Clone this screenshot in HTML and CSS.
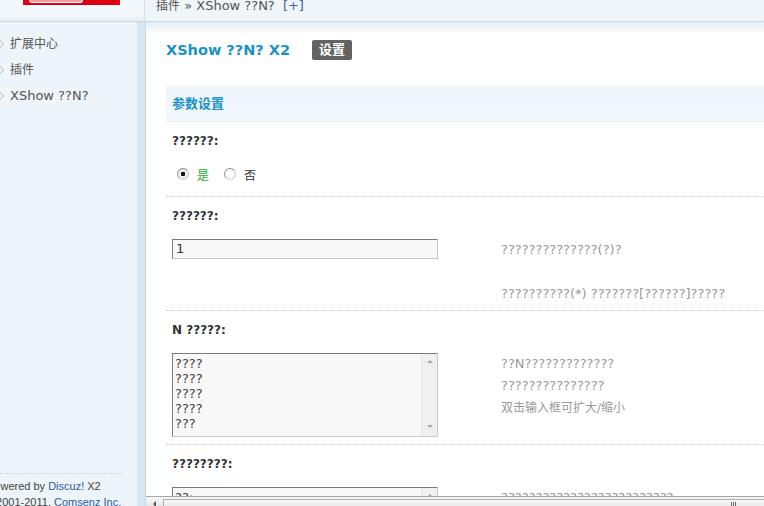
FILE: index.html
```html
<!DOCTYPE html>
<html>
<head>
<meta charset="utf-8">
<link rel="stylesheet" href="styles.css">
</head>
<body>
<div class="top">
  <div class="top-left"><div class="logo"><span class="logo-glow"></span></div></div>
  <div class="crumb"><span class="cjk">插件</span> » XShow ??N? <span class="plus">[+]</span></div>
</div>
<div class="frame">
  <aside class="side">
    <ul class="menu">
      <li><span class="cjk">扩展中心</span></li>
      <li><span class="cjk">插件</span></li>
      <li>XShow ??N?</li>
    </ul>
    <div class="copy">
      <p class="c1">Powered by <span class="lnk">Discuz!</span> X2</p>
      <p class="c2">&copy;2001-2011, <span class="lnk">Comsenz Inc.</span></p>
    </div>
  </aside>
  <main class="content">
    <div class="scrollarea">
      <div class="title-row">
        <h1 class="title">XShow ??N? X2</h1>
        <span class="btn">设置</span>
      </div>
      <div class="section">参数设置</div>

      <div class="lbl">??????:</div>
      <div class="val val1">
        <div class="radios">
          <span class="radio checked"></span><span class="opt yes">是</span>
          <span class="radio"></span><span class="opt">否</span>
        </div>
      </div>

      <div class="lbl">??????:</div>
      <div class="val val2">
        <div><div class="inp">1</div></div>
        <div class="desc">??????????????(?)?<br><br>??????????(*) ???????[??????]?????</div>
      </div>

      <div class="lbl">N ?????:</div>
      <div class="val val3">
        <div>
          <div class="ta">
            <div class="ta-text">????
????
????
????
???</div>
            <div class="ta-bar"><span class="arr-up"></span><span class="arr-down"></span></div>
          </div>
        </div>
        <div class="desc">??N?????????????<br>???????????????<br><span class="cjk">双击输入框可扩大/缩小</span></div>
      </div>

      <div class="lbl">????????:</div>
      <div class="val val4">
        <div>
          <div class="ta">
            <div class="ta-text">??:</div>
            <div class="ta-bar"><span class="arr-up"></span><span class="arr-down"></span></div>
          </div>
        </div>
        <div class="desc">?????????????????????????</div>
      </div>
    </div>
    <div class="hscroll">
      <div class="hs-btn"><span class="arr-left"></span></div>
      <div class="hs-thumb"><span class="grip"></span></div>
    </div>
  </main>
</div>
</body>
</html>
```
FILE: styles.css
```css
html, body {
  margin: 0;
  padding: 0;
  width: 764px;
  height: 506px;
  overflow: hidden;
  background: #fff;
  font-family: "DejaVu Sans", "Noto Sans CJK SC", sans-serif;
  font-size: 12px;
  color: #333;
}
.cjk { font-size: 12px; }

.top {
  display: flex;
  height: 21px;
  border-bottom: 1px solid #c6d8e2;
  background: #eff5f9;
}
.top-left {
  width: 145px;
  flex-shrink: 0;
  border-right: 1px solid #d2e1ea;
  box-sizing: border-box;
  background: linear-gradient(#f3f8fc 0, #f3f8fc 17px, #e9f1f7 17px);
}
.logo {
  margin-left: 23px;
  width: 97px;
  height: 5px;
  background: #dc0012;
  overflow: hidden;
}
.logo-glow {
  display: block;
  margin-left: 6px;
  width: 52px;
  height: 2px;
  border: 1px solid #fff;
  border-top: 0;
  background: rgba(255, 255, 255, 0.6);
  border-radius: 0 0 6px 6px;
  filter: blur(0.6px);
}
.crumb {
  padding-left: 11px;
  font-size: 13px;
  line-height: 12px;
  color: #555;
  white-space: nowrap;
}
.plus { color: #3d63a6; margin-left: 4px; }

.frame {
  display: flex;
  height: 484px;
}
.side {
  width: 137px;
  flex-shrink: 0;
  background: #edf4fa;
  border-right: 8px solid #d7e6f3;
  display: flex;
  flex-direction: column;
  overflow: hidden;
}
.menu {
  list-style: none;
  margin: 0;
  padding: 9px 0 0;
}
.menu li {
  position: relative;
  height: 26px;
  line-height: 26px;
  padding-left: 10px;
  font-size: 13px;
  color: #555;
  white-space: nowrap;
}
.menu li::before {
  content: "";
  position: absolute;
  left: -3px;
  top: 10px;
  width: 4px;
  height: 4px;
  border: 1px solid #c4c9cc;
  transform: rotate(45deg);
}
.copy {
  margin-top: auto;
  margin-right: 15px;
  margin-bottom: -4px;
  padding-top: 4px;
  border-top: 1px dashed #cfd8de;
}
.copy p {
  margin: 0;
  white-space: nowrap;
  font-family: "Liberation Sans", "Noto Sans CJK SC", sans-serif;
  font-size: 11px;
  line-height: 16px;
  color: #444;
}
.copy .c1 { margin-left: -13px; }
.copy .c2 { margin-left: -12px; }
.lnk { color: #2c5d9f; }

.content {
  flex: 1;
  min-width: 0;
  border-left: 1px solid #c9d8e2;
  display: flex;
  flex-direction: column;
}
.scrollarea {
  flex: 1;
  overflow: hidden;
  padding-left: 20px;
  background: linear-gradient(#e3edf4, #ffffff 12px) no-repeat;
}
.title-row {
  display: flex;
  align-items: center;
  height: 20px;
  margin-top: 18px;
}
.title {
  margin: 0;
  font-size: 14.5px;
  font-weight: bold;
  color: #1a92c8;
  white-space: nowrap;
}
.btn {
  margin-left: 22px;
  height: 20px;
  line-height: 20px;
  padding: 0 7px;
  background: #636363;
  color: #fff;
  font-weight: bold;
  font-size: 13px;
  border-radius: 2px;
}
.section {
  margin-top: 26px;
  height: 35px;
  line-height: 35px;
  padding-left: 6px;
  background: linear-gradient(#eef5fb, #f3f9fd);
  border-bottom: 1px solid #e4eef5;
  font-weight: bold;
  color: #1a92c8;
  font-size: 13px;
}
.lbl {
  height: 30px;
  box-sizing: border-box;
  padding: 10px 0 0 6px;
  line-height: 18px;
  font-weight: bold;
  font-size: 12px;
  color: #333;
  white-space: nowrap;
}
.val {
  display: grid;
  grid-template-columns: 329px 1fr;
  box-sizing: border-box;
  padding: 12px 0 0 6px;
  border-bottom: 1px dotted #cfcfcf;
}
.val1 { height: 45px; }
.val2 { height: 84px; }
.val3 { height: 104px; }
.val4 { height: 60px; }

.radios {
  display: flex;
  align-items: center;
  height: 20px;
}
.radio {
  width: 12px;
  height: 12px;
  box-sizing: border-box;
  border-radius: 50%;
  border: 1px solid;
  border-color: #8a8a8a #c6c6c6 #d6d6d6 #9a9a9a;
  background: #fdfdfd;
  margin-left: 5px;
}
.radio.checked { background: radial-gradient(#111 0, #111 2px, #f3f3f3 2.5px, #e6e6e6 6px); }
.opt {
  margin-left: 8px;
  margin-right: 10px;
  font-size: 12px;
  color: #333;
}
.opt.yes { color: #19b319; }

.inp {
  width: 266px;
  height: 20px;
  box-sizing: border-box;
  border: 1px solid;
  border-color: #7c7c7c #c9c9c9 #c9c9c9 #7c7c7c;
  background: #f8f8f8;
  padding-left: 3px;
  font-size: 13px;
  line-height: 18px;
  color: #333;
}
.desc {
  font-size: 13px;
  line-height: 22px;
  color: #9a9a9a;
  white-space: nowrap;
}
.ta {
  width: 266px;
  height: 84px;
  box-sizing: border-box;
  border: 1px solid;
  border-color: #7c7c7c #c9c9c9 #c9c9c9 #7c7c7c;
  background: #f8f8f8;
  display: flex;
}
.ta-text {
  flex: 1;
  padding: 2px 2px;
  font-size: 13px;
  line-height: 15px;
  color: #444;
  white-space: pre;
  overflow: hidden;
}
.ta-bar {
  width: 16px;
  background: #f0f0f0;
  border-left: 1px solid #e6e6e6;
  display: flex;
  flex-direction: column;
  justify-content: space-between;
  align-items: center;
  padding: 6px 0 8px;
  box-sizing: border-box;
}
.arr-up {
  width: 0; height: 0;
  border-left: 3px solid transparent;
  border-right: 3px solid transparent;
  border-bottom: 3px solid #a8a8a8;
}
.arr-down {
  width: 0; height: 0;
  border-left: 3px solid transparent;
  border-right: 3px solid transparent;
  border-top: 3px solid #a8a8a8;
}

.hscroll {
  height: 10px;
  flex-shrink: 0;
  box-sizing: border-box;
  border-top: 1px solid #a8a8a8;
  background: linear-gradient(#f6f6f6, #e8e8e8);
  display: flex;
}
.hs-btn {
  width: 17px;
  display: flex;
  justify-content: center;
  padding-top: 4px;
}
.arr-left {
  width: 0; height: 0;
  border-top: 3px solid transparent;
  border-bottom: 3px solid transparent;
  border-right: 3px solid #555;
}
.hs-thumb {
  flex: 1;
  margin-top: 2px;
  border-top: 1px solid #b0b0b0;
  border-left: 1px solid #b0b0b0;
  background: linear-gradient(#f9f9f9, #ebebeb);
  display: flex;
  justify-content: flex-end;
  padding-right: 27px;
}
.grip {
  margin-top: 2px;
  width: 6px;
  height: 6px;
  background: repeating-linear-gradient(90deg, #6a6a6a 0, #6a6a6a 1px, transparent 1px, transparent 2px);
}
```
